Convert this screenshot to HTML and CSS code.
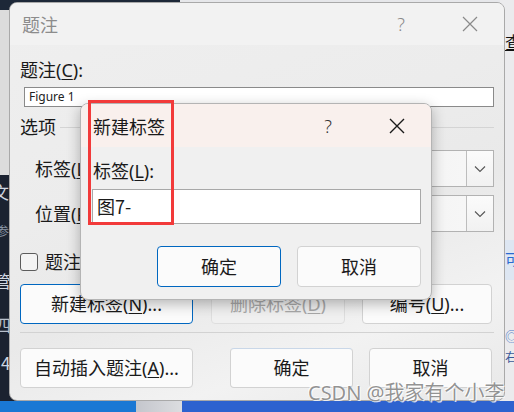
FILE: index.html
```html
<!DOCTYPE html>
<html lang="zh-CN">
<head>
<meta charset="utf-8">
<title>题注</title>
<link rel="stylesheet" href="styles.css">
</head>
<body>
<div class="desktop">
  <div class="bg-top-dark"></div>
  <div class="bg-left-light"></div>
  <div class="bg-left-dark">
    <span class="frag f1">文行</span>
    <span class="frag f2">参</span>
    <span class="frag f3">管</span>
    <span class="frag f4">四</span>
    <span class="frag f5">4</span>
  </div>
  <div class="bg-right">
    <span class="rfrag r1">查</span>
    <div class="rband"><span class="r2">可</span></div>
    <span class="rfrag r3">◎</span>
    <span class="rfrag r4">右属</span>
  </div>
  <div class="taskbar">
    <div class="tb-a"></div>
    <div class="tb-b"></div>
    <div class="tb-c"></div>
  </div>

  <div class="dlg main">
    <div class="titlebar">
      <span class="title">题注</span>
      <span class="tbtn help">?</span>
      <span class="tbtn close"><svg width="16" height="16" viewBox="0 0 16 16"><path d="M1 1 L15 15 M15 1 L1 15" stroke="currentColor" stroke-width="1.2" fill="none"/></svg></span>
    </div>
    <div class="body">
      <div class="label">题注(<u>C</u>):</div>
      <div class="input small">Figure 1</div>
      <div class="group-head"><span>选项</span><span class="line"></span></div>
      <div class="field-row first">
        <span class="flabel">标签(<u>L</u>):</span>
        <div class="combo"><span class="combo-text">Figure</span><span class="combo-arrow"><svg width="12" height="8" viewBox="0 0 12 8"><path d="M1 1.5 L6 6.5 L11 1.5" stroke="#555" stroke-width="1.1" fill="none"/></svg></span></div>
      </div>
      <div class="field-row">
        <span class="flabel">位置(<u>P</u>):</span>
        <div class="combo"><span class="combo-text">所选项目下方</span><span class="combo-arrow"><svg width="12" height="8" viewBox="0 0 12 8"><path d="M1 1.5 L6 6.5 L11 1.5" stroke="#555" stroke-width="1.1" fill="none"/></svg></span></div>
      </div>
      <div class="check-row"><span class="box"></span><span>题注中不包含标签(<u>E</u>)</span></div>
      <div class="btn-row">
        <span class="btn primary w173">新建标签(<u>N</u>)...</span>
        <span class="btn disabled w134 g18">删除标签(<u>D</u>)</span>
        <span class="btn w130 g17">编号(<u>U</u>)...</span>
      </div>
      <div class="sep"></div>
      <div class="btn-row second">
        <span class="btn w173">自动插入题注(<u>A</u>)...</span>
        <span class="btn w123 g37 okb">确定</span>
        <span class="btn w123 g16">取消</span>
      </div>
    </div>
  </div>

  <div class="dlg sub">
    <div class="titlebar">
      <span class="title">新建标签</span>
      <span class="tbtn help">?</span>
      <span class="tbtn close"><svg width="16" height="16" viewBox="0 0 16 16"><path d="M1 1 L15 15 M15 1 L1 15" stroke="currentColor" stroke-width="1.4" fill="none"/></svg></span>
    </div>
    <div class="body">
      <div class="label">标签(<u>L</u>):</div>
      <div class="input big">图7-</div>
      <div class="sub-btns">
        <span class="btn primary w124">确定</span>
        <span class="btn w124">取消</span>
      </div>
    </div>
  </div>

  <div class="redbox"></div>
  <div class="mark">CSDN @我家有个小李</div>
</div>
</body>
</html>
```
FILE: styles.css
```css
* { box-sizing: border-box; margin: 0; padding: 0; }
body { margin: 0; width: 514px; height: 412px; overflow: hidden; font-family: "Noto Sans", "Noto Sans CJK SC", sans-serif; color: #1a1a1a; }
.desktop { position: relative; width: 514px; height: 412px; background: #e6e7ea; overflow: hidden; }

.bg-top-dark { position: absolute; left: 0; top: 0; width: 180px; height: 10px; background: #1d2838; }
.bg-left-light { position: absolute; left: 0; top: 10px; width: 20px; height: 165px; background: #dcdcdc; }
.bg-left-dark { position: absolute; left: 0; top: 175px; width: 20px; height: 227px; background: #1b2230; color: #cfd6e0; overflow: hidden; }
.frag { position: absolute; left: -6px; font-size: 17px; line-height: 20px; white-space: nowrap; font-family: "Noto Sans CJK SC", sans-serif; }
.f1 { top: 7px; left: -8px; }
.f2 { top: 46px; font-size: 12px; left: -3px; color: #8a95a6; }
.f3 { top: 96px; }
.f4 { top: 140px; color: #b8c0cc; }
.f5 { top: 178px; left: 1px; }

.bg-right { position: absolute; left: 500px; top: 0; width: 14px; height: 402px; background: #ebebed; overflow: hidden; }
.rfrag { position: absolute; left: 5px; white-space: nowrap; font-family: "Noto Sans CJK SC", sans-serif; }
.r1 { top: 32px; font-size: 17px; line-height: 20px; color: #111; text-decoration: underline; }
.rband { position: absolute; left: 0; top: 240px; width: 14px; height: 40px; background: #dde6f2; }
.r2 { position: absolute; left: 5px; top: 10px; font-size: 15px; line-height: 18px; color: #2a6ad0; font-family: "Noto Sans CJK SC", sans-serif; }
.r3 { top: 326px; font-size: 13px; color: #4a78c8; }
.r4 { top: 348px; font-size: 12px; color: #3a5a9a; }

.taskbar { position: absolute; left: 0; top: 401px; width: 514px; height: 11px; display: flex; }
.tb-a { width: 136px; background: #1a78d4; }
.tb-b { width: 46px; background: linear-gradient(90deg, #c4c6cc, #dcdde0); }
.tb-c { flex: 1; background: #2d62cf; }

.dlg { position: absolute; display: flex; flex-direction: column; border-radius: 8px; overflow: hidden; }
.main { left: 9px; top: 2px; width: 496px; height: 399px; border: 1px solid #a9a9a9; background: linear-gradient(160deg, #efefef 0%, #ececec 40%, #e9e9e9 60%, #f2f2f2 80%, #e8e8e8 100%); }
.titlebar { height: 42px; flex: none; display: flex; align-items: center; }
.main .titlebar { background: #f2f2f2; }
.title { flex: 1; padding-left: 12px; font-size: 18px; line-height: 24px; font-family: "Noto Sans CJK SC", sans-serif; }
.main .title { color: #8c8c8c; }
.tbtn { flex: none; display: flex; align-items: center; justify-content: center; height: 42px; }
.tbtn.help { width: 70px; font-size: 18px; font-family: "Noto Sans", sans-serif; font-weight: 300; }
.tbtn.close { width: 68px; }
.main .tbtn { color: #8a8a8a; }
.main .body { flex: 1; padding: 0 10px; display: flex; flex-direction: column; }

.label { font-size: 18px; line-height: 24px; margin-top: 13px; }
.input { background: #fff; white-space: nowrap; }
.input.small { margin: 5px 0 0 4px; width: 470px; height: 20px; border: 1px solid #8a8a8a; font-size: 12px; line-height: 18px; padding-left: 4px; color: #222; }

.group-head { margin-top: 8px; display: flex; align-items: center; font-size: 18px; line-height: 24px; }
.group-head .line { flex: 1; height: 1px; background: #d4d4d4; margin-left: 4px; }

.field-row { display: flex; align-items: center; padding-left: 15px; margin-top: 8px; }
.field-row.first { margin-top: 11px; }
.flabel { width: 80px; font-size: 18px; line-height: 24px; white-space: nowrap; }
.combo { flex: 1; height: 37px; border: 1px solid #b2b2b2; background: linear-gradient(90deg, #e9e9e9, #f7f7f7); display: flex; align-items: stretch; }
.combo-text { flex: 1; font-size: 16px; line-height: 35px; padding-left: 6px; }
.combo-arrow { width: 27px; border-left: 1px solid #bdbdbd; background: linear-gradient(#fbfbfb, #f1f1f1); display: flex; align-items: center; justify-content: center; }

.check-row { margin-top: 18px; display: flex; align-items: center; gap: 7px; font-size: 18px; line-height: 24px; }
.box { width: 18px; height: 18px; border: 1px solid #5c5c5c; border-radius: 3px; background: #f4f4f4; }

.btn-row { margin-top: 10px; display: flex; }
.btn-row.second { margin-top: 15px; }
.sep { margin-top: 8px; height: 1px; background: #d2d2d2; }
.btn { height: 40px; display: flex; align-items: center; justify-content: center; border: 1px solid #d2d2d2; border-radius: 4px; background: #fbfbfb; font-size: 18px; line-height: 24px; white-space: nowrap; color: #1a1a1a; }
.btn.primary { border-color: #0067c0; }
.btn.disabled { color: #a8a8a8; background: #f0f0f0; border-color: #dedede; }
.btn.okb { border-color: #c9d7e8 #d2d2d2 #d2d2d2 #d2d2d2; }
.w173 { width: 173px; }
.w134 { width: 134px; }
.w130 { width: 130px; }
.w123 { width: 123px; }
.w124 { width: 124px; height: 41px; }
.g18 { margin-left: 18px; }
.g17 { margin-left: 17px; }
.g37 { margin-left: 37px; }
.g16 { margin-left: 16px; }

.sub { left: 80px; top: 103px; width: 352px; height: 197px; border: 1px solid #b4b4b4; background: #f0f0f0; box-shadow: 0 4px 14px rgba(0, 0, 0, 0.28); }
.sub .titlebar { height: 43px; background: #f9f0ed; }
.sub .tbtn { height: 43px; color: #1a1a1a; }
.sub .tbtn.help { color: #333; }
.sub .body { flex: 1; padding: 0 10px 0 11px; display: flex; flex-direction: column; }
.sub .label { margin-top: 12px; padding-left: 1px; }
.input.big { margin-top: 6px; height: 35px; border: 1px solid #a8a8a8; font-size: 18px; line-height: 33px; padding-left: 4px; font-family: "Noto Sans CJK SC", sans-serif; }
.sub-btns { margin-top: 22px; display: flex; justify-content: flex-end; gap: 16px; }

.redbox { position: absolute; left: 88px; top: 100px; width: 86px; height: 125px; border: 3px solid #f23a3a; }
.mark { position: absolute; left: 308px; top: 379px; font-size: 20px; line-height: 28px; color: rgba(128, 128, 128, 0.85); white-space: nowrap; text-shadow: 0 0 1px #fff, 1px 1px 0 rgba(255,255,255,0.8), -1px -1px 0 rgba(255,255,255,0.8); font-family: "Noto Sans", "Noto Sans CJK SC", sans-serif; }
u { text-decoration: underline; text-underline-offset: 2px; text-decoration-thickness: 1px; }
```
